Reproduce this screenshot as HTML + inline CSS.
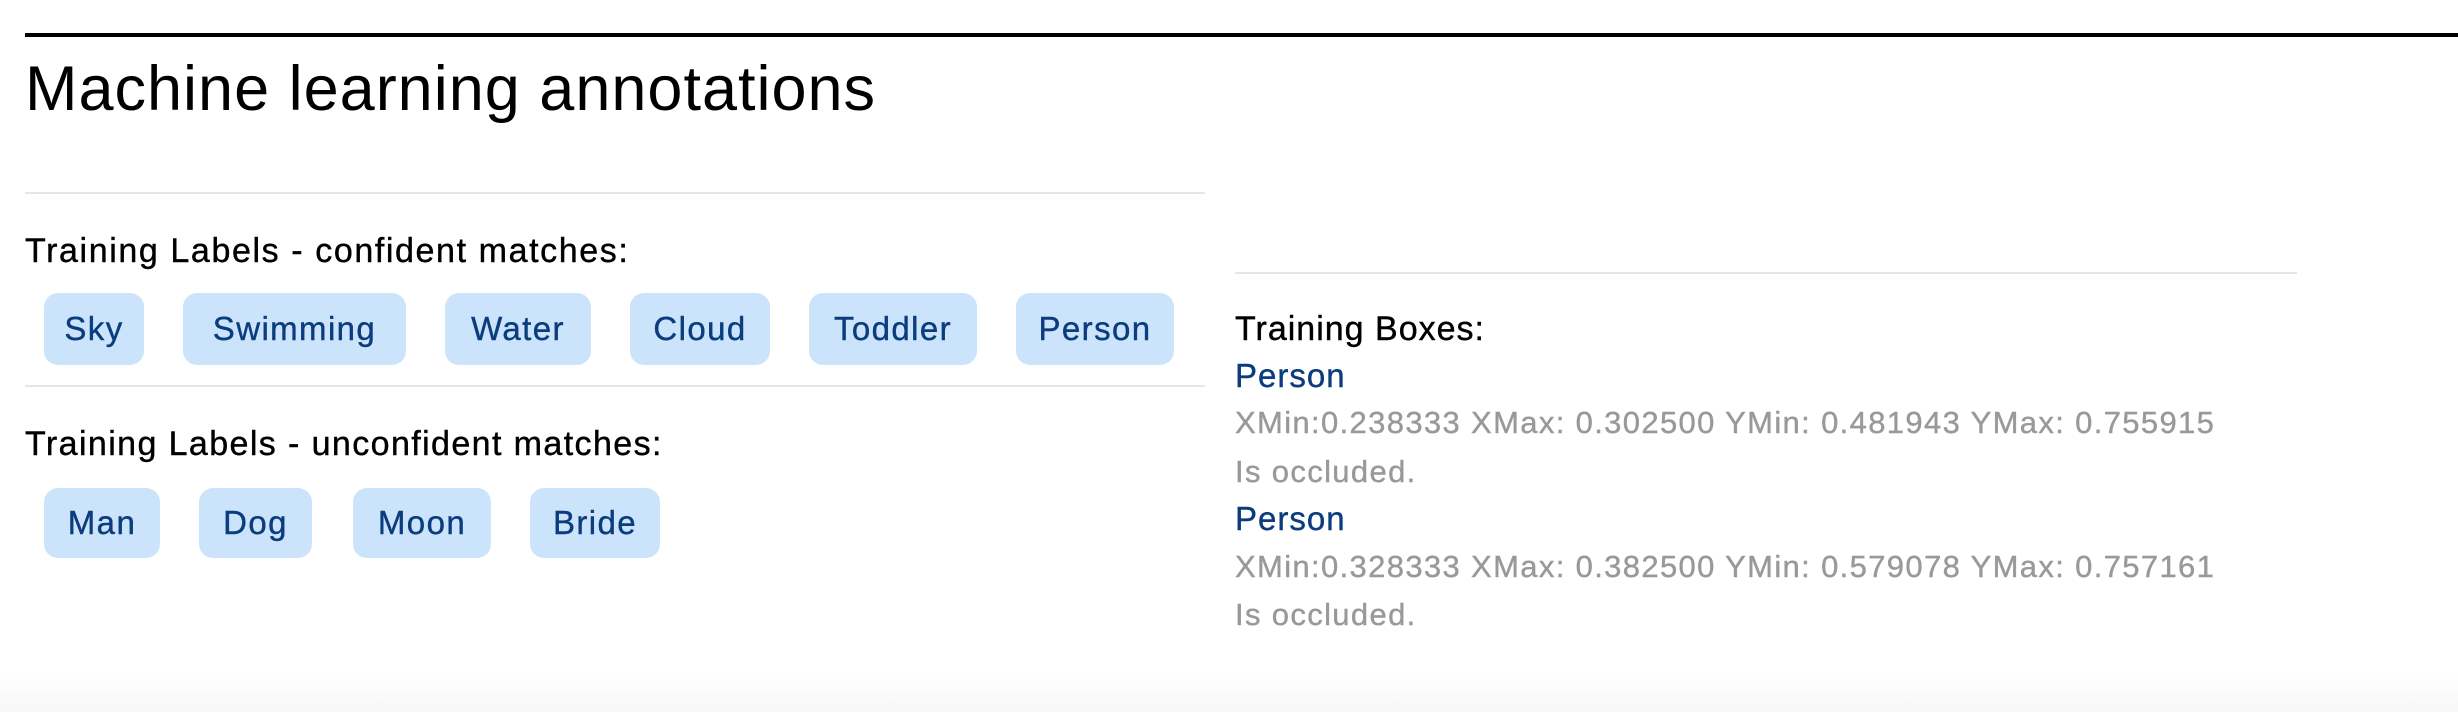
<!DOCTYPE html>
<html><head><meta charset="utf-8"><style>
html,body{margin:0;padding:0;background:#fff;width:2458px;height:712px;overflow:hidden;position:relative;font-family:"Liberation Sans",sans-serif;}
.a{position:absolute;white-space:nowrap;}
.hr{position:absolute;height:2px;background:#e6e6e6;}
.chip{position:absolute;background:#cce4fb;border-radius:14px;color:#0b3d7e;font-size:33px;letter-spacing:1.4px;display:flex;align-items:center;justify-content:center;-webkit-text-stroke:0.4px #0b3d7e;}
.lbl{font-size:34px;letter-spacing:1.6px;color:#000;-webkit-text-stroke:0.4px #000;}
.g{font-size:31px;color:#999;letter-spacing:1.35px;-webkit-text-stroke:0.4px #999;}
.b{font-size:33px;color:#0b3d7e;letter-spacing:1px;-webkit-text-stroke:0.4px #0b3d7e;}
</style></head><body>
<div style="position:absolute;left:25px;top:33px;width:2433px;height:4px;background:#000"></div>
<div class="a" style="left:25px;top:53px;font-size:63px;letter-spacing:1px;line-height:72px">Machine learning annotations</div>
<div class="hr" style="left:25px;top:192px;width:1180px"></div>
<div class="a lbl" style="left:25px;top:232px;line-height:38px">Training Labels - confident matches:</div>
<div class="chip" style="left:44px;top:293px;width:100px;height:72px">Sky</div>
<div class="chip" style="left:183px;top:293px;width:223px;height:72px">Swimming</div>
<div class="chip" style="left:445px;top:293px;width:146px;height:72px">Water</div>
<div class="chip" style="left:630px;top:293px;width:140px;height:72px">Cloud</div>
<div class="chip" style="left:809px;top:293px;width:168px;height:72px">Toddler</div>
<div class="chip" style="left:1016px;top:293px;width:158px;height:72px">Person</div>
<div class="hr" style="left:25px;top:385px;width:1180px"></div>
<div class="a lbl" style="left:25px;top:425px;line-height:38px;letter-spacing:1.4px">Training Labels - unconfident matches:</div>
<div class="chip" style="left:44px;top:488px;width:116px;height:70px">Man</div>
<div class="chip" style="left:199px;top:488px;width:113px;height:70px">Dog</div>
<div class="chip" style="left:353px;top:488px;width:138px;height:70px">Moon</div>
<div class="chip" style="left:530px;top:488px;width:130px;height:70px">Bride</div>
<div class="hr" style="left:1235px;top:272px;width:1062px"></div>
<div class="a lbl" style="left:1235px;top:310px;line-height:38px;letter-spacing:1px">Training Boxes:</div>
<div class="a b" style="left:1235px;top:357px;line-height:38px">Person</div>
<div class="a g" style="left:1235px;top:404px;line-height:38px">XMin:0.238333 XMax: 0.302500 YMin: 0.481943 YMax: 0.755915</div>
<div class="a g" style="left:1235px;top:453px;line-height:38px">Is occluded.</div>
<div class="a b" style="left:1235px;top:500px;line-height:38px">Person</div>
<div class="a g" style="left:1235px;top:548px;line-height:38px">XMin:0.328333 XMax: 0.382500 YMin: 0.579078 YMax: 0.757161</div>
<div class="a g" style="left:1235px;top:596px;line-height:38px">Is occluded.</div>
<div style="position:absolute;left:0;top:672px;width:2458px;height:40px;background:linear-gradient(#fff,#f7f7f7)"></div>
</body></html>
